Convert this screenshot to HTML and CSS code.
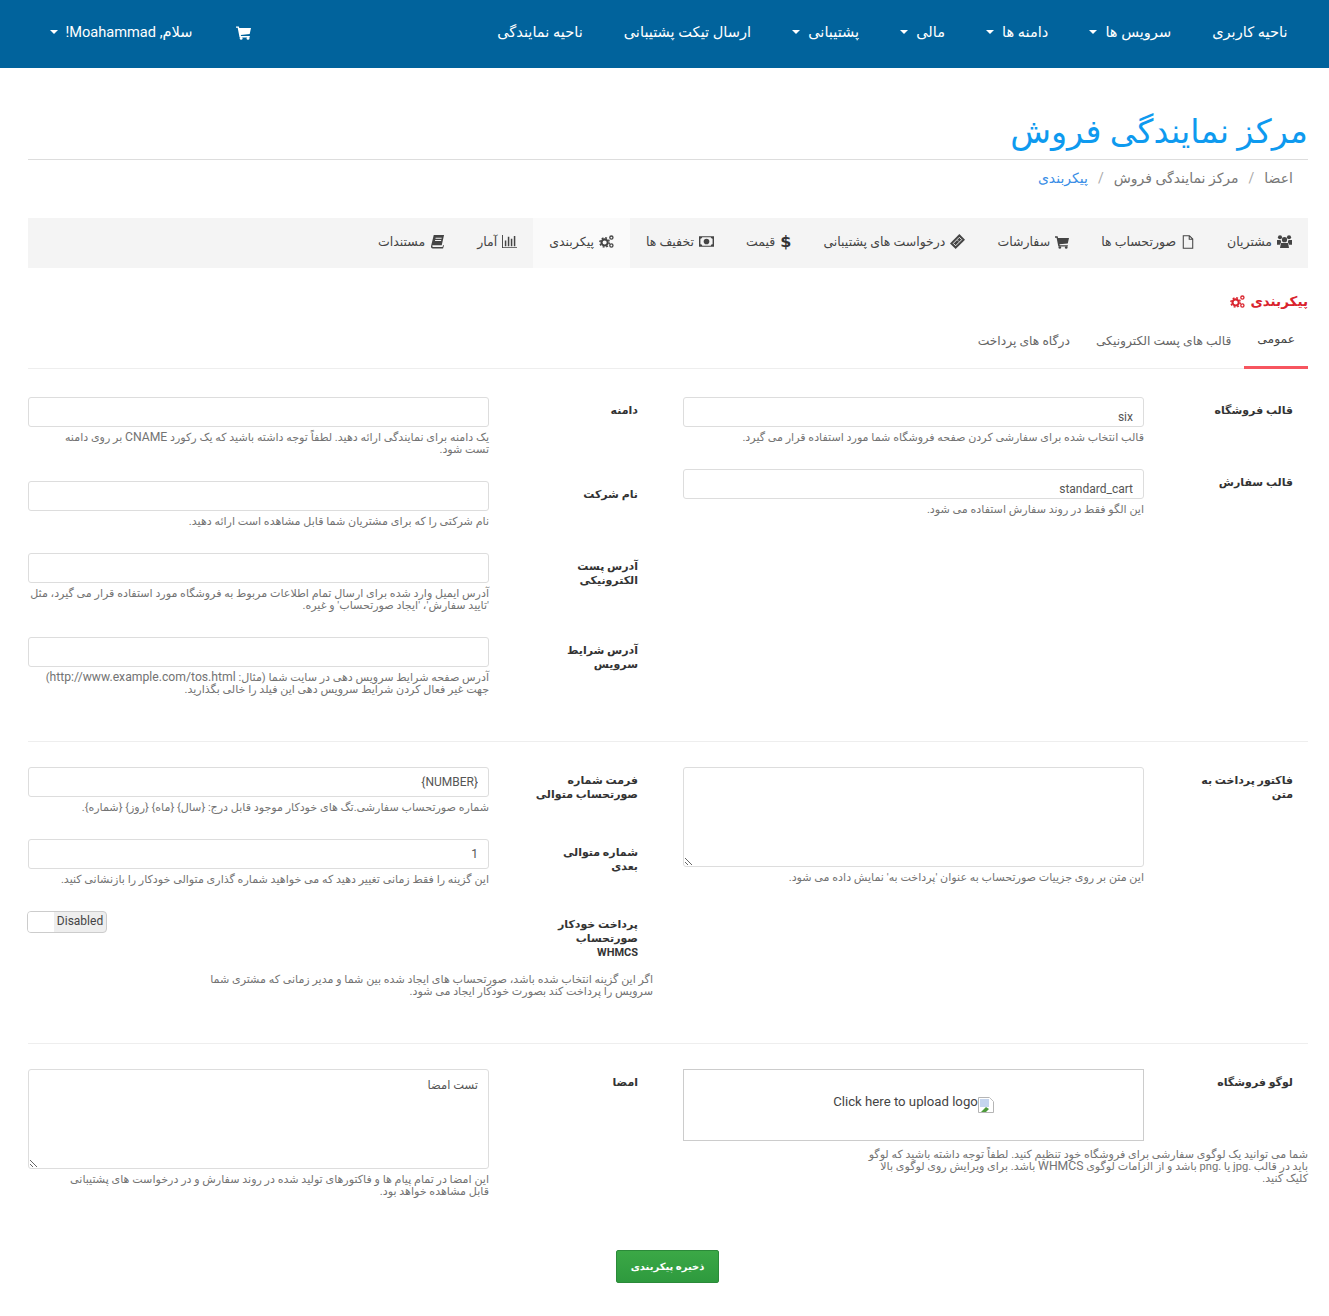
FILE: index.html

```html
<!DOCTYPE html>
<html dir="rtl" lang="fa">
<head>
	<meta charset="utf-8">
	<meta name="viewport" content="width=device-width, initial-scale=1">
	<title>مرکز نمایندگی فروش</title>
	<link rel="stylesheet" href="styles.css">
</head>
<body>
	<svg class="sprite" xmlns="http://www.w3.org/2000/svg">
		<symbol id="i-users" viewBox="0 0 16 16"><circle cx="8" cy="6" r="2.8"/><circle cx="3.2" cy="3.4" r="2.200"/><circle cx="12.800" cy="3.400" r="2.200"/><path d="M4.200 9.500h7.600l1 5.500H3.200z"/><path d="M0 6.300h3.700l.8 2.200-1.500 3H0zM16 6.300h-3.700l-.8 2.200 1.500 3H16z"/></symbol>
		<symbol id="i-file" viewBox="0 0 16 16"><path fill="none" stroke="currentColor" stroke-width="1.200" d="M2.600.8h7l3.800 3.800v10.600H2.600zM9.400.8v4h4"/></symbol>
		<symbol id="i-cart" viewBox="0 0 16 16"><path d="M0 1.500h3l.5 1.800H16l-1.400 6.400-9.500 1 .3 1h9.300v1.500H3.800L1.800 3H0z"/><circle cx="5.500" cy="14.300" r="1.500"/><circle cx="12.800" cy="14.300" r="1.500"/></symbol>
		<symbol id="i-ticket" viewBox="0 0 16 16"><path d="M10 0 16 6 6 16 0 10z"/><path fill="none" stroke="#f4f4f4" stroke-width="1" d="M10 3.500 12.500 6 6 12.500 3.500 10z"/><path fill="none" stroke="#f4f4f4" stroke-width=".8" d="M8 6.500 9.500 8"/></symbol>
		<symbol id="i-money" viewBox="0 0 16 16"><path fill-rule="evenodd" d="M0 2.500h16v11H0zM1.500 5v6a2 2 0 0 1 2 1.500h9A2 2 0 0 1 14.500 11V5A2 2 0 0 1 12.500 3.500h-9A2 2 0 0 1 1.500 5z"/><circle cx="8" cy="8" r="3"/></symbol>
		<symbol id="i-cogs" viewBox="0 0 16 16"><circle cx="6" cy="9" r="3.300" fill="none" stroke="currentColor" stroke-width="2.200"/><circle cx="6" cy="9" r="5" fill="none" stroke="currentColor" stroke-width="1.600" stroke-dasharray="2 1.930"/><circle cx="13.200" cy="3.800" r="1.700" fill="none" stroke="currentColor" stroke-width="1.400"/><circle cx="13.200" cy="12.200" r="1.700" fill="none" stroke="currentColor" stroke-width="1.400"/></symbol>
		<symbol id="i-chart" viewBox="0 0 16 16"><path d="M0 1h1v13h15v1H0z"/><path d="M3 7h1.600v6H3zM6.200 3h1.600v10H6.200zM9.400 5H11v8H9.400zM12.600 2h1.600v11h-1.600z"/></symbol>
		<symbol id="i-book" viewBox="0 0 16 16"><path d="M4 1h11l-2.500 11H3.300c-.7 0-1 .5-.9 1 .1.500.5.800 1 .8h10l.6-2 .9.500-1 3.200H3C1.500 15.500.700 14 1.200 12.500z"/><path fill="#f4f4f4" d="M6 4h6.500l-.2 1H5.800zM5.500 6.500H12l-.2 1H5.300z"/></symbol>
	</svg>

	<nav class="topnav">
		<a class="topnav-item" href="#">ناحیه کاربری</a>
		<a class="topnav-item" href="#">سرویس ها <span class="caret"></span></a>
		<a class="topnav-item" href="#">دامنه ها <span class="caret"></span></a>
		<a class="topnav-item" href="#">مالی <span class="caret"></span></a>
		<a class="topnav-item" href="#">پشتیبانی <span class="caret"></span></a>
		<a class="topnav-item" href="#">ارسال تیکت پشتیبانی</a>
		<a class="topnav-item" href="#">ناحیه نمایندگی</a>
		<div class="topnav-end">
			<a class="topnav-item" href="#"><svg class="icon"><use href="#i-cart"/></svg></a>
			<a class="topnav-item" href="#">سلام, Moahammad! <span class="caret"></span></a>
		</div>
	</nav>

	<main class="page">
		<h1 class="page-title">مرکز نمایندگی فروش</h1>
		<div class="crumbs">
			<span>اعضا</span><span class="crumb-sep">/</span><span>مرکز نمایندگی فروش</span><span class="crumb-sep">/</span><a href="#">پیکربندی</a>
		</div>

		<div class="tabbar">
			<a class="tab" href="#"><svg class="icon"><use href="#i-users"/></svg>مشتریان</a>
			<a class="tab" href="#"><svg class="icon icon-sm"><use href="#i-file"/></svg>صورتحساب ها</a>
			<a class="tab" href="#"><svg class="icon icon-sm"><use href="#i-cart"/></svg>سفارشات</a>
			<a class="tab" href="#"><svg class="icon"><use href="#i-ticket"/></svg>درخواست های پشتیبانی</a>
			<a class="tab" href="#"><span class="dollar">$</span>قیمت</a>
			<a class="tab" href="#"><svg class="icon"><use href="#i-money"/></svg>تخفیف ها</a>
			<a class="tab tab-active" href="#"><svg class="icon"><use href="#i-cogs"/></svg>پیکربندی</a>
			<a class="tab" href="#"><svg class="icon"><use href="#i-chart"/></svg>آمار</a>
			<a class="tab" href="#"><svg class="icon"><use href="#i-book"/></svg>مستندات</a>
		</div>

		<h2 class="section-title">پیکربندی <svg class="icon"><use href="#i-cogs"/></svg></h2>

		<div class="subtabs">
			<a class="subtab subtab-active" href="#">عمومی</a>
			<a class="subtab" href="#">قالب های پست الکترونیکی</a>
			<a class="subtab" href="#">درگاه های پرداخت</a>
		</div>

		<section class="group group-first">
			<div class="col">
				<div class="field">
					<label class="field-label">قالب فروشگاه</label>
					<div>
						<select class="input input-low"><option>six</option></select>
						<p class="help">قالب انتخاب شده برای سفارشی کردن صفحه فروشگاه شما مورد استفاده قرار می گیرد.</p>
					</div>
				</div>
				<div class="field">
					<label class="field-label">قالب سفارش</label>
					<div>
						<select class="input input-low"><option>standard_cart</option></select>
						<p class="help">این الگو فقط در روند سفارش استفاده می شود.</p>
					</div>
				</div>
			</div>
			<div class="col">
				<div class="field">
					<label class="field-label">دامنه</label>
					<div>
						<input class="input">
						<p class="help help-lines">یک دامنه برای نمایندگی ارائه دهید. لطفاً توجه داشته باشید که یک رکورد <span class="latin">CNAME</span> بر روی دامنه<br>تست شود.</p>
					</div>
				</div>
				<div class="field">
					<label class="field-label">نام شرکت</label>
					<div>
						<input class="input">
						<p class="help">نام شرکتی را که برای مشتریان شما قابل مشاهده است ارائه دهید.</p>
					</div>
				</div>
				<div class="field">
					<label class="field-label">آدرس پست<br>الکترونیکی</label>
					<div>
						<input class="input">
						<p class="help help-lines">آدرس ایمیل وارد شده برای ارسال تمام اطلاعات مربوط به فروشگاه مورد استفاده قرار می گیرد، مثل<br>'تایید سفارش'، 'ایجاد صورتحساب' و غیره.</p>
					</div>
				</div>
				<div class="field">
					<label class="field-label">آدرس شرایط<br>سرویس</label>
					<div>
						<input class="input">
						<p class="help help-lines">آدرس صفحه شرایط سرویس دهی در سایت شما (مثال: <span class="latin">http://www.example.com/tos.html</span>)<br>جهت غیر فعال کردن شرایط سرویس دهی این فیلد را خالی بگذارید.</p>
					</div>
				</div>
			</div>
		</section>

		<section class="group">
			<div class="col">
				<div class="field">
					<label class="field-label">فاکتور پرداخت به<br>متن</label>
					<div>
						<textarea class="input area"></textarea>
						<p class="help">این متن بر روی جزییات صورتحساب به عنوان 'پرداخت به' نمایش داده می شود.</p>
					</div>
				</div>
			</div>
			<div class="col">
				<div class="field">
					<label class="field-label">فرمت شماره<br>صورتحساب متوالی</label>
					<div>
						<input class="input" value="{NUMBER}">
						<p class="help">شماره صورتحساب سفارشی.تگ های خودکار موجود قابل درج: {سال} {ماه} {روز} {شماره}.</p>
					</div>
				</div>
				<div class="field">
					<label class="field-label">شماره متوالی<br>بعدی</label>
					<div>
						<input class="input" value="1">
						<p class="help">این گزینه را فقط زمانی تغییر دهید که می خواهید شماره گذاری متوالی خودکار را بازنشانی کنید.</p>
					</div>
				</div>
				<div class="field field-toggle">
					<label class="field-label">پرداخت خودکار<br>صورتحساب<br>WHMCS</label>
					<div>
						<div class="toggle"><span class="toggle-state">Disabled</span><span class="toggle-knob"></span></div>
					</div>
				</div>
				<p class="help help-wide help-lines">اگر این گزینه انتخاب شده باشد، صورتحساب های ایجاد شده بین شما و مدیر زمانی که مشتری شما<br>سرویس را پرداخت کند بصورت خودکار ایجاد می شود.</p>
			</div>
		</section>

		<section class="group group-last">
			<div class="col">
				<div class="field field-flush">
					<label class="field-label">لوگو فروشگاه</label>
					<div class="logo-box">
						<span>Click here to upload logo</span><svg class="broken" viewBox="0 0 16 16"><path fill="#fff" stroke="#b5b5b5" d="M.5.5h11l4 4v11H.5z"/><path fill="#c5d5ee" d="M2 2h9v8H2z"/><path fill="#4d9a3a" d="M3 15l5-5 3 2-3 3z"/><path fill="#fff" d="M11 .5l4.500 4.500H11z"/></svg>
					</div>
				</div>
				<p class="help help-wide help-lines">شما می توانید یک لوگوی سفارشی برای فروشگاه خود تنظیم کنید. لطفاً توجه داشته باشید که لوگو<br>باید در قالب .jpg یا .png باشد و از الزامات لوگوی <span class="latin">WHMCS</span> باشد. برای ویرایش روی لوگوی بالا<br>کلیک کنید.</p>
			</div>
			<div class="col">
				<div class="field">
					<label class="field-label">امضا</label>
					<div>
						<textarea class="input area">تست امضا</textarea>
						<p class="help help-lines">این امضا در تمام پیام ها و فاکتورهای تولید شده در روند سفارش و در درخواست های پشتیبانی<br>قابل مشاهده خواهد بود.</p>
					</div>
				</div>
			</div>
		</section>

		<div class="actions">
			<button class="save-btn" type="button">ذخیره پیکربندی</button>
		</div>
	</main>
</body>
</html>
```

FILE: styles.css

```css
*
{
	box-sizing: border-box;
}
html, body
{
	margin: 0;
	padding: 0;
	background-color: #FFFFFF;
}
body
{
	font-family: Roboto, "DejaVu Sans", sans-serif;
	font-size: 12px;
	color: #555555;
}
a
{
	color: inherit;
	text-decoration: none;
}
.sprite
{
	display: none;
}
.icon
{
	width: 15px;
	height: 15px;
	fill: currentColor;
	flex: none;
}
.icon-sm
{
	width: 14px;
	height: 14px;
}

/* top bar */
.topnav
{
	display: flex;
	align-items: center;
	height: 68px;
	padding: 0 21px 4px 29px;
	background-color: #01639C;
}
.topnav-item
{
	display: flex;
	align-items: center;
	gap: 8px;
	padding: 0 20.500px;
	font-size: 14.600px;
	color: #FFFFFF;
	white-space: nowrap;
}
.topnav-end
{
	display: flex;
	align-items: center;
	gap: 3px;
	margin-right: auto;
}
.caret
{
	width: 0;
	height: 0;
	border-top: 4px solid #FFFFFF;
	border-left: 4px solid transparent;
	border-right: 4px solid transparent;
}

/* page head */
.page
{
	margin: 0 21px 0 28px;
	padding-bottom: 32px;
}
.page-title
{
	margin: 40px 0 0;
	padding-bottom: 3px;
	height: 52px;
	font-size: 33.400px;
	line-height: 48px;
	font-weight: normal;
	color: #0E9AEF;
	border-bottom: 1px solid #DDDDDD;
}
.crumbs
{
	display: flex;
	align-items: center;
	height: 36px;
	padding: 0 15px;
	font-size: 14px;
	color: #777777;
}
.crumbs a
{
	color: #3A8EE6;
}
.crumb-sep
{
	padding: 0 10px;
	color: #AAAAAA;
}

/* section nav */
.tabbar
{
	display: flex;
	height: 50px;
	margin-top: 22px;
	background-color: #F4F4F4;
}
.tab
{
	display: flex;
	align-items: center;
	gap: 5px;
	padding: 0 16px 3px;
	font-size: 12.500px;
	color: #444444;
	white-space: nowrap;
}
.tab-active
{
	background-color: #FAFAFA;
}
.dollar
{
	font-family: "DejaVu Sans", sans-serif;
	font-weight: bold;
	font-size: 16px;
	color: #333333;
}
.section-title
{
	display: flex;
	align-items: center;
	gap: 5px;
	margin: 23px 0 1px;
	height: 20px;
	font-size: 13.500px;
	font-weight: bold;
	color: #D9232D;
}
.subtabs
{
	display: flex;
	height: 57px;
	padding-top: 10px;
	border-bottom: 1px solid #EEEEEE;
}
.subtab
{
	display: flex;
	align-items: center;
	padding: 0 13px 10px;
	height: 47px;
	font-size: 12.300px;
	color: #666666;
}
.subtab-active
{
	color: #444444;
	border-bottom: 3px solid #F7555F;
}

/* form */
.group
{
	display: flex;
	padding: 25px 0 20px;
	border-bottom: 1px solid #EEEEEE;
}
.group-first
{
	padding-top: 28px;
}
.group-last
{
	border-bottom: none;
	padding-bottom: 0;
}
.col
{
	width: 50%;
}
.col:first-child
{
	padding-left: 15px;
}
.col:last-child
{
	padding-right: 15px;
}
.field
{
	display: grid;
	grid-template-columns: 164px 461px;
	margin-bottom: 25px;
}
.field-toggle
{
	margin-bottom: 14px;
}
.field-flush
{
	margin-bottom: 8px;
}
.field-label
{
	padding: 7px 15px 0 0;
	font-size: 11px;
	line-height: 14px;
	font-weight: bold;
	color: #333333;
}
.input
{
	display: block;
	width: 100%;
	height: 30px;
	padding: 0 10px;
	font-family: Roboto, "DejaVu Sans", sans-serif;
	font-size: 12px;
	color: #555555;
	background-color: #FFFFFF;
	border: 1px solid #DDDDDD;
	border-radius: 3px;
	outline: none;
}
.input-low
{
	appearance: none;
	padding: 12px 10px 4px;
}
.area
{
	height: 100px;
	padding: 8px 10px;
	font-size: 11.500px;
}
.help
{
	margin: 5px 0 0;
	font-size: 11.100px;
	line-height: 12px;
	color: #737373;
}
.help-lines
{
	white-space: nowrap;
}
.help-wide
{
	width: 461px;
	margin: 0 0 25px;
}
.latin
{
	font-size: 12.200px;
	line-height: 0;
}
.toggle
{
	display: flex;
	width: 80px;
	height: 22px;
	margin-left: -1px;
	margin-right: auto;
	border: 1px solid #CCCCCC;
	border-radius: 4px;
	overflow: hidden;
	background-color: #EEEEEE;
}
.toggle-state
{
	flex: 1;
	text-align: center;
	line-height: 19px;
	font-size: 12px;
	color: #444444;
}
.toggle-knob
{
	width: 26px;
	background-color: #FFFFFF;
}
.logo-box
{
	display: flex;
	justify-content: center;
	align-items: flex-start;
	direction: ltr;
	height: 72px;
	padding-top: 24px;
	font-size: 13.200px;
	color: #444444;
	border: 1px solid #CCCCCC;
}
.broken
{
	width: 16px;
	height: 16px;
	margin-top: 3px;
}
.actions
{
	display: flex;
	justify-content: center;
	padding-top: 27px;
	padding-right: 1px;
}
.save-btn
{
	width: 103px;
	height: 33px;
	font-family: Roboto, "DejaVu Sans", sans-serif;
	font-size: 10px;
	font-weight: bold;
	color: #FFFFFF;
	background: linear-gradient(#3BA846, #2E9A3E);
	border: 1px solid #2B8A39;
	border-radius: 2px;
}
```
